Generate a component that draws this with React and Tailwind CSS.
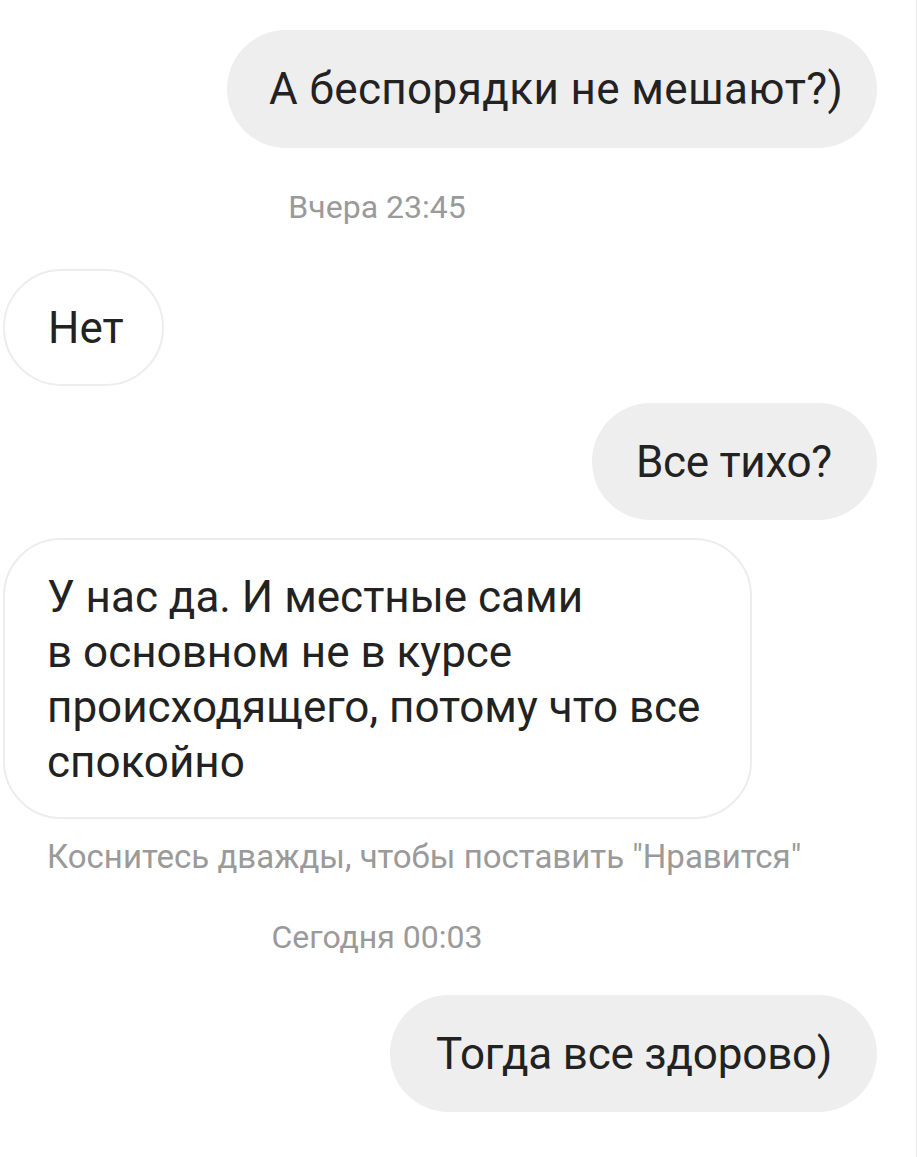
export default function App() {
  const font = { fontFamily: "Roboto, 'Noto Sans', sans-serif" };
  return (
    <div className="w-full min-h-[1157px] bg-white border-r border-[#ececec] text-[#222222]" style={font}>
      <div className="flex flex-col pt-[30px]">
        <div className="flex justify-end pr-[39px]">
          <div className="h-[118px] w-[650px] rounded-full bg-[#eeeeee] flex items-center pl-[42px] text-[44px] tracking-[0.4px] leading-none">
            А беспорядки не мешают?)
          </div>
        </div>
        <div className="w-[754px] text-center text-[32px] text-[#9a9a9a] leading-none mt-[43px]">
          Вчера 23:45
        </div>
        <div className="pl-[3px] mt-[46px]">
          <div className="h-[117px] w-[161px] rounded-full bg-white border-2 border-[#ededed] flex items-center pl-[43px] text-[44px] leading-none">
            Нет
          </div>
        </div>
        <div className="flex justify-end pr-[39px] mt-[17px]">
          <div className="h-[117px] w-[285px] rounded-full bg-[#eeeeee] flex items-center pl-[44px] text-[44px] tracking-[-0.3px] leading-none">
            Все тихо?
          </div>
        </div>
        <div className="pl-[3px] mt-[18px]">
          <div className="w-[749px] h-[281px] rounded-[58px] bg-white border-2 border-[#ededed] pl-[42px] pt-[30px] text-[44px] leading-[55px]">
            У нас да. И местные сами
            <br />
            в основном не в курсе
            <br />
            происходящего, потому что все
            <br />
            спокойно
          </div>
        </div>
        <div className="pl-[47px] mt-[21px] text-[33px] text-[#9a9a9a] leading-none">
          Коснитесь дважды, чтобы поставить "Нравится"
        </div>
        <div className="w-[754px] text-center text-[32px] text-[#9a9a9a] leading-none mt-[48px]">
          Сегодня 00:03
        </div>
        <div className="flex justify-end pr-[39px] mt-[42px]">
          <div className="h-[117px] w-[487px] rounded-full bg-[#eeeeee] flex items-center pl-[46px] text-[44px] tracking-[-0.2px] leading-none">
            Тогда все здорово)
          </div>
        </div>
      </div>
    </div>
  );
}
